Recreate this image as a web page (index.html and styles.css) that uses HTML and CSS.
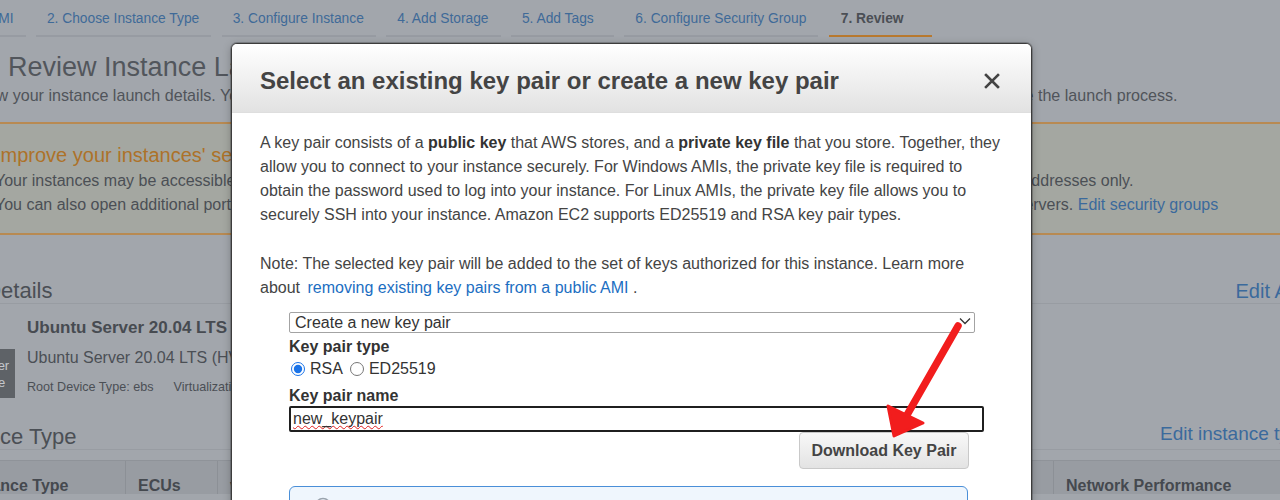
FILE: index.html
```html
<!DOCTYPE html>
<html lang="en">
<head>
<meta charset="utf-8">
<title>Review Instance Launch</title>
<link rel="stylesheet" href="styles.css">
</head>
<body>
<div class="page">
  <nav class="tabs">
    <a class="tab">1. Choose AMI</a>
    <a class="tab">2. Choose Instance Type</a>
    <a class="tab">3. Configure Instance</a>
    <a class="tab">4. Add Storage</a>
    <a class="tab">5. Add Tags</a>
    <a class="tab">6. Configure Security Group</a>
    <a class="tab active">7. Review</a>
  </nav>
  <h1 class="page-title">Step 7: Review Instance Launch</h1>
  <p class="page-desc">Please review your instance launch details. You can go back to edit changes for each section. Click <b>Launch</b> to assign a key pair to your instance and complete the launch process.</p>

  <div class="warning">
    <h2 class="warning-title">Improve your instances' security. Your security group, launch-wizard-1, is open to the world.</h2>
    <p class="warning-line">Your instances may be accessible from any IP address. We recommend that you update your security group rules to allow access from known IP addresses only.</p>
    <p class="warning-line">You can also open additional ports in your security group to facilitate access to the application or service you're running, e.g., HTTP (80) for web servers. <a class="link">Edit security groups</a></p>
  </div>

  <section class="section">
    <div class="section-head">
      <h3 class="section-title">AMI Details</h3>
      <a class="link edit-link">Edit AMI</a>
    </div>
    <div class="ami">
      <div class="badge">Free tier<br>eligible</div>
      <div class="ami-info">
        <div class="ami-name">Ubuntu Server 20.04 LTS (HVM), SSD Volume Type - ami-0c1a7f89451184c8b</div>
        <div class="ami-desc">Ubuntu Server 20.04 LTS (HVM), EBS General Purpose (SSD) Volume Type.</div>
        <div class="ami-meta"><span>Root Device Type: ebs</span><span class="meta-gap">Virtualization type: hvm</span></div>
      </div>
    </div>
  </section>

  <section class="section">
    <div class="section-head section-head-2">
      <h3 class="section-title">Instance Type</h3>
      <a class="link edit-link-2">Edit instance type</a>
    </div>
    <div class="table-head">
      <div class="th th-type">Instance Type</div>
      <div class="th th-ecu">ECUs</div>
      <div class="th th-mid">vCPUs</div>
      <div class="th th-net">Network Performance</div>
    </div>
  </section>
</div>

<div class="modal">
  <div class="modal-header">
    <h2 class="modal-title">Select an existing key pair or create a new key pair</h2>
    <svg class="close" width="16" height="16" viewBox="0 0 16 16"><path d="M2 2 L14 14 M14 2 L2 14" stroke="#444" stroke-width="2.6" stroke-linecap="square"/></svg>
  </div>
  <div class="modal-body">
    <p class="modal-text">A key pair consists of a <b>public key</b> that AWS stores, and a <b>private key file</b> that you store. Together, they<br>allow you to connect to your instance securely. For Windows AMIs, the private key file is required to<br>obtain the password used to log into your instance. For Linux AMIs, the private key file allows you to<br>securely SSH into your instance. Amazon EC2 supports ED25519 and RSA key pair types.</p>
    <p class="modal-text note">Note: The selected key pair will be added to the set of keys authorized for this instance. Learn more<br>about <a class="modal-link">removing existing key pairs from a public AMI</a> .</p>

    <div class="form">
      <div class="select">
        <span>Create a new key pair</span>
        <svg width="12" height="8" viewBox="0 0 12 8"><path d="M1 1.5 L6 6.5 L11 1.5" fill="none" stroke="#333" stroke-width="1.3"/></svg>
      </div>
      <div class="field-label">Key pair type</div>
      <div class="radios">
        <label class="radio"><input type="radio" name="kt" checked> RSA</label>
        <label class="radio"><input type="radio" name="kt"> ED25519</label>
      </div>
      <div class="field-label label-name">Key pair name</div>
      <div class="text-input"><span class="misspelled">new_keypair</span></div>
      <div class="btn-row"><button class="btn">Download Key Pair</button></div>
      <div class="info-box">
        <svg width="18" height="18" viewBox="0 0 18 18"><circle cx="9" cy="9" r="7.5" fill="none" stroke="#9aa4ae" stroke-width="1.5"/></svg>
      </div>
    </div>
  </div>
</div>

<svg class="arrow" width="90" height="130" viewBox="0 0 90 130">
  <line x1="78" y1="11" x2="27" y2="100" stroke="#f21d1d" stroke-width="7.5" stroke-linecap="round"/>
  <polygon points="14,121 8,91 43,108" fill="#f21d1d" stroke="#f21d1d" stroke-width="3" stroke-linejoin="round"/>
</svg>
</body>
</html>
```

FILE: styles.css
```css
html, body {
  margin: 0;
  padding: 0;
}
body {
  position: relative;
  width: 1280px;
  height: 500px;
  overflow: hidden;
  background: #a2a6ac;
  font-family: "Liberation Sans", Arial, Helvetica, sans-serif;
  color: #4b4f55;
}

/* ---------- dimmed page ---------- */
.page {
  width: 1400px;
  margin-left: -90px;
}
.tabs {
  display: flex;
  gap: 10.4px;
  padding-left: 2px;
  height: 37px;
}
.tab {
  box-sizing: border-box;
  min-width: 103px;
  height: 37px;
  padding: 10px 12px 0 11px;
  font-size: 13.8px;
  line-height: 17px;
  color: #3f6a98;
  border-bottom: 2px solid #979ba2;
  white-space: nowrap;
}
.tab.active {
  padding-left: 12px;
  font-weight: bold;
  color: #4b4f55;
  border-bottom-color: #b8792f;
}
.page-title {
  margin: 15px 0 0 5px;
  font-size: 27px;
  line-height: 30px;
  font-weight: normal;
  color: #52565c;
}
.page-desc {
  margin: 3px 0 0 -2px;
  font-size: 16.1px;
  line-height: 20px;
  white-space: nowrap;
  color: #50545a;
}
.page-desc b { font-weight: normal; }

.warning {
  margin-top: 17px;
  padding: 17px 0 16px 85px;
  background: #a4a7a1;
  border-top: 2px solid #b88a52;
  border-bottom: 2px solid #b88a52;
}
.warning-title {
  margin: 0;
  font-size: 20px;
  line-height: 28px;
  font-weight: normal;
  color: #ad7229;
  white-space: nowrap;
}
.warning-line {
  margin: 0;
  font-size: 16px;
  line-height: 24px;
  white-space: nowrap;
  color: #4b4f55;
}
.link {
  color: #3b6a9c;
}

.section-head {
  display: flex;
  justify-content: space-between;
  align-items: baseline;
  margin-top: 44px;
  padding-left: 30px;
  border-bottom: 1px solid #989ca2;
}
.section-head-2 {
  margin-top: 24px;
  align-items: flex-end;
}
.section-title {
  margin: 0;
  font-size: 22px;
  line-height: 24px;
  font-weight: normal;
  color: #4b4f55;
}
.edit-link { font-size: 20px; line-height: 24px; }
.edit-link-2 {
  margin-bottom: 3px;
  font-size: 19px;
  line-height: 24px;
}

.ami {
  display: flex;
  gap: 12px;
  padding: 14px 0 0 45px;
}
.badge {
  box-sizing: border-box;
  width: 60px;
  height: 49px;
  margin-top: 31px;
  padding-top: 8px;
  background: #5e6267;
  color: #c4c7cc;
  font-size: 13px;
  line-height: 17px;
  text-align: center;
}
.ami-name {
  font-size: 17px;
  line-height: 20px;
  font-weight: bold;
  color: #474b51;
  white-space: nowrap;
}
.ami-desc {
  margin-top: 10px;
  font-size: 16px;
  line-height: 20px;
  white-space: nowrap;
}
.ami-meta {
  margin-top: 11px;
  font-size: 12.6px;
  line-height: 16px;
  white-space: nowrap;
}
.meta-gap { margin-left: 20px; }

.table-head {
  display: flex;
  height: 33px;
  margin-top: 10px;
  background: #989ca2;
  border-top: 1px solid #8f9399;
}
.th {
  box-sizing: border-box;
  padding-top: 16px;
  font-size: 16px;
  line-height: 18px;
  font-weight: bold;
  color: #45494f;
  white-space: nowrap;
}
.th-type { width: 215px; padding-left: 53px; }
.th-ecu { width: 92px; padding-left: 12px; border-left: 1px solid #8c9096; }
.th-mid { width: 836px; padding-left: 12px; border-left: 1px solid #8c9096; }
.th-net { flex: 1; padding-left: 12px; border-left: 1px solid #8c9096; }

/* ---------- modal ---------- */
.modal {
  position: absolute;
  left: 231px;
  top: 43px;
  z-index: 2;
  box-sizing: border-box;
  width: 801px;
  height: 520px;
  background: #fff;
  border: 1px solid #3c3c3c;
  border-radius: 6px;
  box-shadow: 0 0 0 1px rgba(0, 0, 0, 0.2), 0 2px 8px rgba(0, 0, 0, 0.25);
  overflow: hidden;
  color: #444;
}
.modal-header {
  box-sizing: border-box;
  height: 69px;
  display: flex;
  align-items: center;
  justify-content: space-between;
  padding: 6px 31px 0 28px;
  background: linear-gradient(#ffffff 0%, #f2f2f2 45%, #e2e2e2 100%);
  border-bottom: 1px solid #dedede;
}
.modal-title {
  margin: 0;
  font-size: 24px;
  line-height: 28px;
  font-weight: bold;
  color: #444;
  white-space: nowrap;
}
.close { display: block; }
.modal-body {
  padding: 18px 20px 0 28px;
}
.modal-text {
  margin: 0 0 25px;
  font-size: 16px;
  line-height: 24px;
  color: #444;
  white-space: nowrap;
}
.modal-text b { color: #333; }
.modal-text.note { margin-bottom: 0; }
.modal-link {
  margin-left: 3px;
  color: #1b6ec2;
}

.form {
  margin: 12px 0 0 29px;
}
.select {
  box-sizing: border-box;
  width: 686px;
  height: 21px;
  display: flex;
  align-items: center;
  justify-content: space-between;
  padding: 0 3px 0 5px;
  border: 1px solid #a3a3a3;
  border-radius: 2px;
  font-size: 16px;
  line-height: 19px;
  color: #333;
}
.select svg { display: block; margin-top: -4px; }
.field-label {
  margin-top: 4px;
  font-size: 16px;
  line-height: 20px;
  font-weight: bold;
  color: #333;
}
.radios {
  display: flex;
  gap: 7px;
  margin-top: 2px;
  height: 20px;
}
.radio {
  display: flex;
  align-items: center;
  gap: 5px;
  font-size: 16px;
  line-height: 20px;
  color: #333;
}
.radio input {
  width: 14px;
  height: 14px;
  margin: 0 0 0 2px;
  accent-color: #1a73e8;
}
.radio + .radio input { margin-left: 0; }
.label-name { margin-top: 7px; }
.text-input {
  box-sizing: border-box;
  width: 695px;
  height: 26px;
  margin-top: 0;
  padding: 0 2px;
  border: 2px solid #1f1f1f;
  border-radius: 2px;
  font-size: 16px;
  line-height: 22px;
  color: #333;
}
.misspelled {
  text-decoration: underline wavy #e02020;
  text-decoration-thickness: 1px;
  text-underline-offset: 1px;
  text-decoration-skip-ink: none;
}
.btn-row {
  display: flex;
  justify-content: flex-end;
  width: 680px;
}
.btn {
  box-sizing: border-box;
  width: 170px;
  height: 37px;
  padding: 0;
  border: 1px solid #c9c9c9;
  border-radius: 4px;
  background: linear-gradient(#f8f8f8, #e3e3e3);
  font-family: "Liberation Sans", Arial, sans-serif;
  font-size: 16px;
  font-weight: bold;
  color: #444;
}
.info-box {
  box-sizing: border-box;
  width: 679px;
  height: 60px;
  margin-top: 17px;
  padding: 10px 0 0 24px;
  background: #eff6fd;
  border: 1px solid #4a8fd8;
  border-radius: 6px;
}
.info-box svg { display: block; }

/* ---------- annotation arrow ---------- */
.arrow {
  position: absolute;
  left: 880px;
  top: 315px;
  z-index: 3;
  pointer-events: none;
}
```
